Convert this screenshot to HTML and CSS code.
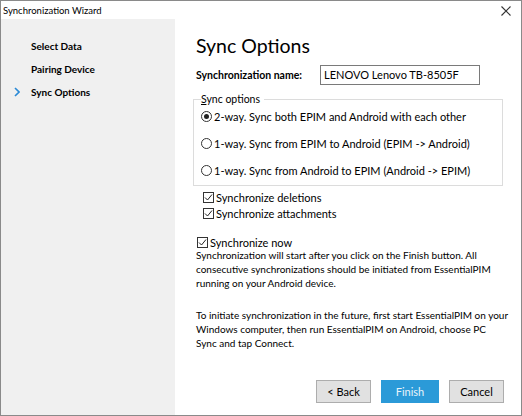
FILE: index.html
```html
<!doctype html>
<html>
	<head>
		<meta charset="utf-8" />
		<title>Synchronization Wizard</title>
		<link rel="stylesheet" href="styles.css">
	</head>
	<body>
		<div class="window">
			<div class="titlebar">
				<span class="title">Synchronization Wizard</span>
				<svg class="close" width="10" height="10" viewBox="0 0 10 10">
					<path d="M0.5 0.5 L9.5 9.5 M9.5 0.5 L0.5 9.5" stroke="#333" stroke-width="1.1" fill="none" />
				</svg>
			</div>
			<div class="client">
				<nav class="steps">
					<div class="step">Select Data</div>
					<div class="step">Pairing Device</div>
					<div class="step current">
						<svg class="chevron" width="6" height="10" viewBox="0 0 6 10">
							<path d="M1 1 L5 5 L1 9" stroke="#2b8ad6" stroke-width="1.6" fill="none" />
						</svg>
						Sync Options
					</div>
				</nav>
				<main class="page">
					<h1 class="heading">Sync Options</h1>
					<div class="name_row">
						<label class="name_label">Synchronization name:</label>
						<div class="textbox">LENOVO Lenovo TB-8505F</div>
					</div>
					<div class="group">
						<div class="legend"><u>S</u>ync options</div>
						<div class="radio_row"><span class="radio checked"></span>2-way. Sync both EPIM and Android with each other</div>
						<div class="radio_row"><span class="radio"></span>1-way. Sync from EPIM to Android (EPIM -&gt; Android)</div>
						<div class="radio_row"><span class="radio"></span>1-way. Sync from Android to EPIM (Android -&gt; EPIM)</div>
					</div>
					<div class="checks">
						<div class="check_row"><span class="checkbox"><svg width="9" height="9" viewBox="0 0 9 9"><path d="M1 4.5 L3.5 7 L8 1.5" stroke="#222" stroke-width="1" fill="none" /></svg></span>Synchronize deletions</div>
						<div class="check_row"><span class="checkbox"><svg width="9" height="9" viewBox="0 0 9 9"><path d="M1 4.5 L3.5 7 L8 1.5" stroke="#222" stroke-width="1" fill="none" /></svg></span>Synchronize attachments</div>
					</div>
					<div class="sync_now">
						<div class="check_row"><span class="checkbox"><svg width="9" height="9" viewBox="0 0 9 9"><path d="M1 4.5 L3.5 7 L8 1.5" stroke="#222" stroke-width="1" fill="none" /></svg></span>Synchronize now</div>
						<p class="note">Synchronization will start after you click on the Finish button. All consecutive synchronizations should be initiated from EssentialPIM running on your Android device.</p>
					</div>
					<p class="note future">To initiate synchronization in the future, first start EssentialPIM on your Windows computer, then run EssentialPIM on Android, choose PC Sync&nbsp;and tap Connect.</p>
					<div class="buttons">
						<button class="button">&lt; Back</button>
						<button class="button primary">Finish</button>
						<button class="button">Cancel</button>
					</div>
				</main>
			</div>
		</div>
	</body>
</html>
```
FILE: styles.css
```css
body {
	margin : 0;
	background : #ffffff;
	font-family : Lato, "Open Sans", sans-serif;
	font-size : 11px;
	color : #000000;
}
.window {
	width : 520px;
	height : 414px;
	border : 1px solid #8a8a8a;
	display : flex;
	flex-direction : column;
	background : #ffffff;
}
.titlebar {
	height : 18px;
	display : flex;
	align-items : center;
	justify-content : space-between;
	padding : 0 10px 0 2px;
}
.title {
	font-size : 9.5px;
	color : #000000;
}
.close {
	margin-top : 1px;
}
.client {
	flex : 1;
	display : flex;
}
.steps {
	width : 174px;
	background : #f0f0f0;
	padding-top : 19px;
	box-sizing : border-box;
}
.step {
	position : relative;
	height : 23px;
	line-height : 16px;
	padding-left : 30px;
	font-weight : 700;
	font-size : 10px;
}
.chevron {
	position : absolute;
	left : 13px;
	top : 3px;
}
.page {
	flex : 1;
	padding-left : 21px;
	padding-right : 9px;
	display : flex;
	flex-direction : column;
}
.heading {
	margin : 14px 0 0 0;
	font-size : 19.5px;
	font-weight : 400;
	line-height : 26px;
}
.name_row {
	display : flex;
	align-items : center;
	margin-top : 6px;
}
.name_label {
	width : 124px;
	font-weight : 700;
	font-size : 10.5px;
}
.textbox {
	width : 155px;
	height : 18px;
	border : 1px solid #7a7a7a;
	padding-left : 3px;
	line-height : 18px;
}
/* group box: the caption sits on the top border line */
.group {
	position : relative;
	margin : 14px 0 0 -3px;
	padding : 8px 0 7px 7px;
	border : 1px solid #dcdcdc;
	width : 301px;
	display : flex;
	flex-direction : column;
	gap : 11px;
}
.legend {
	position : absolute;
	left : 7px;
	top : -8px;
	padding-right : 4px;
	background : #ffffff;
	line-height : 14px;
	font-size : 10.5px;
}
.radio_row {
	display : flex;
	align-items : center;
	height : 16px;
}
.radio {
	width : 11px;
	height : 11px;
	border : 1px solid #333333;
	border-radius : 50%;
	box-sizing : border-box;
	margin-right : 2px;
	position : relative;
}
.radio.checked::after {
	content : "";
	position : absolute;
	left : 2px;
	top : 2px;
	width : 5px;
	height : 5px;
	border-radius : 50%;
	background : #222222;
}
.checks {
	margin-top : 3px;
	padding-left : 7px;
}
.check_row {
	display : flex;
	align-items : center;
	height : 16px;
}
.checkbox {
	width : 11px;
	height : 11px;
	border : 1px solid #333333;
	box-sizing : border-box;
	margin-right : 2px;
	display : flex;
	align-items : center;
	justify-content : center;
}
.sync_now {
	margin-top : 13px;
	padding-left : 1px;
}
.note {
	margin : 0;
	line-height : 14px;
	font-size : 10px;
}
.sync_now .note {
	margin : -2px 0 0 -1px;
}
.future {
	margin-top : 18px;
}
.buttons {
	display : flex;
	justify-content : flex-end;
	gap : 10px;
	margin-top : auto;
	margin-bottom : 12px;
	margin-right : 8px;
}
.button {
	height : 23px;
	min-width : 55px;
	padding : 0 8px;
	font-family : inherit;
	font-size : 11px;
	background : #e1e1e1;
	border : 1px solid #adadad;
	color : #000000;
}
.button.primary {
	min-width : 58px;
	background : #2b9ad8;
	border-color : #2b9ad8;
	color : #e8f4fb;
}
```
